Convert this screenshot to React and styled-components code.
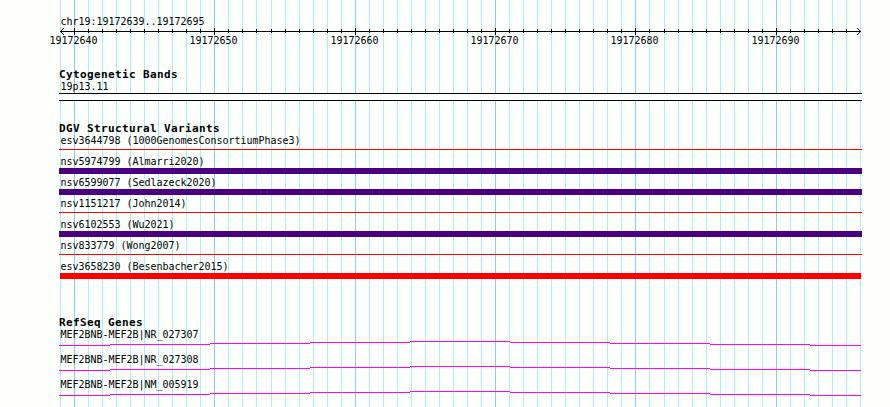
import React from "react";
import styled, { createGlobalStyle, css } from "styled-components";

const GlobalStyle = createGlobalStyle`
  body { margin: 0; background: #fdfffc; }
`;

const textStyle = css`
  font-family: "DejaVu Sans Mono", "Liberation Mono", monospace;
  font-size: 10px;
  line-height: 14px;
  letter-spacing: -0.02px;
  color: #000;
  white-space: pre;
`;

const Browser = styled.main`
  position: relative;
  box-sizing: border-box;
  width: 890px;
  height: 407px;
  padding: 15px 28px 0 59px;
  overflow: hidden;
  background: #fdfffc;
`;

const GridLines = styled.svg`
  position: absolute;
  inset: 0;
  shape-rendering: crispEdges;
`;

const Content = styled.div`
  position: relative;
  display: flex;
  flex-direction: column;
`;

const Label = styled.div`
  ${textStyle}
  height: 12px;
  padding-left: 1.5px;
`;

const Ruler = styled.svg`
  display: block;
  width: 803px;
  height: 7px;
  margin-top: 1px;
  overflow: visible;
  shape-rendering: crispEdges;
`;

const Scale = styled.div`
  display: grid;
  grid-template-columns: 140px 141px 140px 140px 141px 60px;
  height: 12px;
  margin: -1px 0 0 -9.5px;
`;

const ScaleLabel = styled.span`
  ${textStyle}
`;

const Track = styled.section`
  display: flex;
  flex-direction: column;
  margin-top: ${(p) => p.$gap}px;
`;

const Title = styled.h2`
  ${textStyle}
  height: 12px;
  margin: 0;
  font-size: 11px;
  font-weight: bold;
  letter-spacing: 0.378px;
`;

const Band = styled.div`
  box-sizing: border-box;
  height: 8px;
  margin-top: 1px;
  border: solid #000;
  border-width: 1px 0;
  background: #fdfffc;
`;

const VariantRow = styled.div`
  height: 21px;
`;

const VariantBar = styled.div`
  height: ${(p) => (p.$thin ? 1 : 6)}px;
  margin: ${(p) => (p.$thin ? 3 : 1)}px ${(p) => (p.$inset ? 1 : 0)}px 0;
  background: ${(p) => p.$color};
`;

const GeneRow = styled.div`
  height: 25px;
`;

const Intron = styled.svg`
  display: block;
  width: 803px;
  height: 5px;
  margin-top: 1px;
  shape-rendering: crispEdges;
`;

const positions = Array.from(
  { length: 58 },
  (_, i) => 60 + i * 14 + (i >= 15 ? 1 : 0) + (i >= 43 ? 1 : 0)
);
const isMajor = (i) => i % 10 === 1;

const RED = "#ff0000";
const INDIGO = "#4b0082";

const variants = [
  { name: "esv3644798 (1000GenomesConsortiumPhase3)", color: RED, thin: true },
  { name: "nsv5974799 (Almarri2020)", color: INDIGO },
  { name: "nsv6599077 (Sedlazeck2020)", color: INDIGO },
  { name: "nsv1151217 (John2014)", color: RED, thin: true },
  { name: "nsv6102553 (Wu2021)", color: INDIGO },
  { name: "nsv833779 (Wong2007)", color: RED, thin: true },
  { name: "esv3658230 (Besenbacher2015)", color: RED, inset: true },
];

const genes = [
  "MEF2BNB-MEF2B|NR_027307",
  "MEF2BNB-MEF2B|NR_027308",
  "MEF2BNB-MEF2B|NM_005919",
];

const intronSteps = [
  [0, 51, 4],
  [51, 100, 3],
  [151, 100, 2],
  [251, 100, 1],
  [351, 100, 0],
  [451, 100, 1],
  [551, 100, 2],
  [651, 100, 3],
  [751, 51, 4],
];

const scaleLabels = ["19172640", "19172650", "19172660", "19172670", "19172680", "19172690"];

export default function App() {
  return (
    <>
      <GlobalStyle />
      <Browser>
        <GridLines width="890" height="407" aria-hidden="true">
          {positions.map((x, i) => (
            <rect key={x} x={x} y="0" width="1" height="407" fill={isMajor(i) ? "#87ceeb" : "#afeeee"} />
          ))}
        </GridLines>
        <Content>
          <Label>chr19:19172639..19172695</Label>
          <Ruler viewBox="0 0 803 7" aria-hidden="true">
            <rect x="1" y="3" width="801" height="1" />
            {positions.slice(1, -1).map((x, i) => (
              <rect
                key={x}
                x={x - 59}
                y={isMajor(i + 1) ? 0 : 1}
                width="1"
                height={isMajor(i + 1) ? 7 : 4}
              />
            ))}
            {[1, 2, 3].map((d) => (
              <g key={d}>
                <rect x={1 + d} y={3 - d} width="1" height="1" />
                <rect x={1 + d} y={3 + d} width="1" height="1" />
                <rect x={801 - d} y={3 - d} width="1" height="1" />
                <rect x={801 - d} y={3 + d} width="1" height="1" />
              </g>
            ))}
          </Ruler>
          <Scale>
            {scaleLabels.map((label) => (
              <ScaleLabel key={label}>{label}</ScaleLabel>
            ))}
          </Scale>
          <Track $gap={22}>
            <Title>Cytogenetic Bands</Title>
            <Label>19p13.11</Label>
            <Band />
          </Track>
          <Track $gap={21}>
            <Title>DGV Structural Variants</Title>
            {variants.map((v) => (
              <VariantRow key={v.name}>
                <Label>{v.name}</Label>
                <VariantBar $color={v.color} $thin={v.thin} $inset={v.inset} />
              </VariantRow>
            ))}
          </Track>
          <Track $gap={35}>
            <Title>RefSeq Genes</Title>
            {genes.map((name) => (
              <GeneRow key={name}>
                <Label>{name}</Label>
                <Intron viewBox="0 0 803 5" aria-hidden="true">
                  {intronSteps.map(([x, width, y]) => (
                    <rect key={x} x={x} y={y} width={width} height="1" fill="#ff00ff" />
                  ))}
                </Intron>
              </GeneRow>
            ))}
          </Track>
        </Content>
      </Browser>
    </>
  );
}
